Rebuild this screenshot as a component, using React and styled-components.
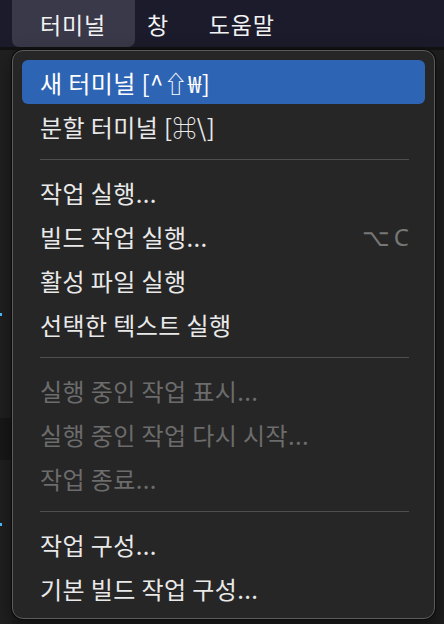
import React from "react";
import styled, { createGlobalStyle } from "styled-components";

const GlobalStyle = createGlobalStyle`
  html, body {
    margin: 0;
    padding: 0;
    background: #1e1e1e;
  }
  body {
    font-family: "Noto Sans CJK KR", "Noto Sans", sans-serif;
    -webkit-font-smoothing: antialiased;
  }
`;

const Screen = styled.div`
  position: relative;
  width: 444px;
  height: 624px;
  overflow: hidden;
  background: #1e1e1e;
`;

const MenuBar = styled.div`
  display: flex;
  align-items: stretch;
  height: 47px;
  padding-left: 20px;
  background: #1c1b2b;
  border-bottom: 3px solid #121212;
`;

const BarItem = styled.div`
  display: flex;
  align-items: center;
  padding: ${(p) => (p.$active ? "0 29px 0 28px" : "0 20px")};
  margin: ${(p) => (p.$active ? "0 -8px" : "0")};
  border-radius: 0 0 7px 7px;
  background: ${(p) => (p.$active ? "#3a3949" : "transparent")};
  color: #f2f2f2;
  font-size: 23px;
  font-weight: 400;
  letter-spacing: 0.8px;
`;

const Editor = styled.div`
  position: relative;
  height: 574px;
`;

const Gutter = styled.div`
  width: 12px;
  height: 100%;
  display: flex;
  flex-direction: column;
  background: #202020;
`;

const GutterBand = styled.div`
  margin-top: ${(p) => p.$top}px;
  height: ${(p) => p.$height}px;
  background: #181818;
`;

const Dot = styled.span`
  position: absolute;
  left: 0;
  top: ${(p) => p.$top}px;
  width: 2px;
  height: 3px;
  background: #4fc1ff;
`;

const Menu = styled.div`
  position: absolute;
  left: 12px;
  top: 0;
  width: 423px;
  padding: 9px 9px 7px;
  box-sizing: border-box;
  height: 569px;
  background: #262626;
  border: 1px solid #5c5c5c;
  border-radius: 11px;
  box-shadow: 0 0 0 1px #0b0b0b, 0 8px 20px rgba(0, 0, 0, 0.5);
`;

const Row = styled.div`
  display: flex;
  align-items: center;
  justify-content: space-between;
  height: 44px;
  padding: 0 12px 0 18px;
  border-radius: 6px;
  background: ${(p) => (p.$selected ? "#2e64b4" : "transparent")};
  color: ${(p) => (p.$disabled ? "#6c6c6c" : p.$selected ? "#ffffff" : "#e9e9e9")};
  font-size: 24px;
  font-weight: 400;
  letter-spacing: 0.4px;
  white-space: nowrap;
`;

const Shortcut = styled.span`
  color: #777777;
  font-family: "Noto Sans", sans-serif;
  font-size: 24px;
  letter-spacing: 4px;
`;

const Separator = styled.div`
  display: flex;
  align-items: center;
  height: 22px;
  padding: 0 16px 0 18px;

  &::after {
    content: "";
    flex: 1;
    height: 1px;
    background: #4f4f4f;
  }
`;

const items = [
  { label: "새 터미널 [^⇧₩]", selected: true },
  { label: "분할 터미널 [⌘\\]" },
  { sep: true },
  { label: "작업 실행..." },
  { label: "빌드 작업 실행...", shortcut: "⌥C" },
  { label: "활성 파일 실행" },
  { label: "선택한 텍스트 실행" },
  { sep: true },
  { label: "실행 중인 작업 표시...", disabled: true },
  { label: "실행 중인 작업 다시 시작...", disabled: true },
  { label: "작업 종료...", disabled: true },
  { sep: true },
  { label: "작업 구성..." },
  { label: "기본 빌드 작업 구성..." },
];

export default function App() {
  return (
    <Screen>
      <GlobalStyle />
      <MenuBar>
        <BarItem $active>터미널</BarItem>
        <BarItem>창</BarItem>
        <BarItem>도움말</BarItem>
      </MenuBar>
      <Editor>
        <Gutter>
          <GutterBand $top={368} $height={42} />
        </Gutter>
        <Dot $top={263} />
        <Dot $top={473} />
        <Menu>
          {items.map((it, i) =>
            it.sep ? (
              <Separator key={i} />
            ) : (
              <Row key={i} $selected={it.selected} $disabled={it.disabled}>
                <span>{it.label}</span>
                {it.shortcut && <Shortcut>{it.shortcut}</Shortcut>}
              </Row>
            )
          )}
        </Menu>
      </Editor>
    </Screen>
  );
}
